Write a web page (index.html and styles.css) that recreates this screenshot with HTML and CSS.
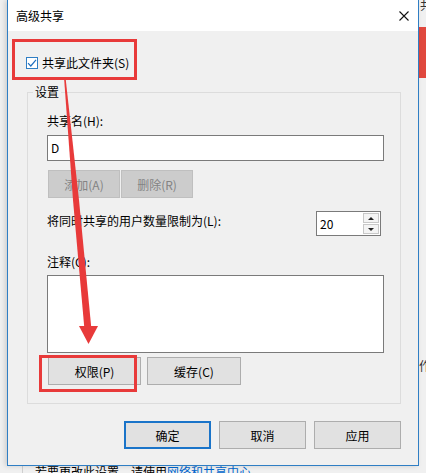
FILE: index.html
```html
<!DOCTYPE html>
<html lang="zh-CN">
<head>
    <meta charset="UTF-8">
    <meta name="viewport" content="width=device-width, initial-scale=1.0">
    <title>高级共享</title>
    <link rel="stylesheet" href="styles.css">
</head>
<body>
    <div class="desktop">
        <!-- Janela de trás (propriedades) -->
        <div class="back-window">
            <span class="back-glyph">共</span>
            <span class="back-glyph low">作</span>
            <div class="back-line"></div>
            <p class="back-note">若要更改此设置，请使用<span class="back-link">网络和共享中心</span>。</p>
        </div>
        <div class="back-banner"></div>

        <!-- Diálogo -->
        <div class="dialog">
            <div class="titlebar">
                <span class="title">高级共享</span>
                <svg class="close" width="10" height="10" viewBox="0 0 10 10">
                    <path d="M0.5 0.5 L9.5 9.5 M9.5 0.5 L0.5 9.5" stroke="#111" stroke-width="1.1" fill="none"/>
                </svg>
            </div>

            <div class="dialog-body">
                <div class="check-row">
                    <span class="checkbox">
                        <svg width="10" height="10" viewBox="0 0 10 10">
                            <path d="M1 5.2 L3.8 8 L9 1.8" stroke="#1f6fbf" stroke-width="1.2" fill="none"/>
                        </svg>
                    </span>
                    <span>共享此文件夹(S)</span>
                </div>

                <fieldset class="group">
                    <legend>设置</legend>
                    <div class="group-body">
                        <div class="field-label">共享名(H):</div>
                        <div class="textbox">D</div>

                        <div class="btn-row small">
                            <button class="btn" disabled>添加(A)</button>
                            <button class="btn" disabled>删除(R)</button>
                        </div>

                        <div class="limit-row">
                            <span class="limit-label">将同时共享的用户数量限制为(L):</span>
                            <div class="spin">
                                <span class="spin-value">20</span>
                                <div class="spin-btns">
                                    <span class="spin-btn up"></span>
                                    <span class="spin-btn down"></span>
                                </div>
                            </div>
                        </div>

                        <div class="field-label comment">注释(C):</div>
                        <div class="memo"></div>

                        <div class="btn-row wide">
                            <button class="btn perm">权限(P)</button>
                            <button class="btn cache">缓存(C)</button>
                        </div>
                    </div>
                </fieldset>

                <div class="dialog-actions">
                    <button class="btn action default">确定</button>
                    <button class="btn action">取消</button>
                    <button class="btn action">应用</button>
                </div>
            </div>
        </div>

        <!-- Marcações vermelhas -->
        <div class="mark mark-share"></div>
        <div class="mark mark-perm"></div>
        <svg class="arrow" width="426" height="473" viewBox="0 0 426 473">
            <polygon points="64.2,80 73,200 84.5,330 91.5,330 79,200 65.8,80" fill="#e83a3a"/>
            <polygon points="79,326 98,326 88.5,344" fill="#e83a3a"/>
        </svg>
    </div>
</body>
</html>
```

FILE: styles.css
```css
/* Base */
* {
    box-sizing: border-box;
}

body {
    margin: 0;
    font-family: "Noto Sans CJK SC", "Noto Sans", sans-serif;
    font-size: 12px;
    line-height: 16px;
    color: #000;
    background: #f0f0f0;
    overflow: hidden;
}

.desktop {
    position: relative;
    width: 426px;
    height: 473px;
    overflow: hidden;
}

/* Janela de trás */
.back-window {
    position: absolute;
    left: 0;
    top: 0;
    width: 426px;
    height: 473px;
    background: #f0f0f0;
}

.back-glyph {
    position: absolute;
    left: 420px;
    top: -3px;
    font-size: 12px;
    color: #333;
}

.back-glyph.low {
    top: 358px;
    left: 419px;
}

.back-banner {
    position: absolute;
    left: 418px;
    top: 27px;
    width: 8px;
    height: 51px;
    background-color: #e0483e;
}

.back-line {
    position: absolute;
    left: 22px;
    top: 466px;
    width: 1px;
    height: 10px;
    background: #cfcfcf;
}

.back-note {
    position: absolute;
    left: 35px;
    top: 464px;
    margin: 0;
    font-size: 12px;
    white-space: nowrap;
}

.back-link {
    color: #0066cc;
}

/* Diálogo */
.dialog {
    position: absolute;
    left: 7px;
    top: 0;
    width: 412px;
    background: #f0f0f0;
    border: 1px solid #2f7ec4;
    border-top: none;
    box-shadow: -2px 0 5px rgba(0, 0, 0, 0.15);
}

.titlebar {
    display: flex;
    align-items: center;
    justify-content: space-between;
    height: 31px;
    padding: 0 9px 0 8px;
    background: #fff;
}

.close {
    display: block;
}

.dialog-body {
    padding: 24px 0 16px;
}

.check-row {
    display: flex;
    align-items: center;
    gap: 4px;
    height: 16px;
    padding-left: 18px;
}

.checkbox {
    display: flex;
    align-items: center;
    justify-content: center;
    width: 12px;
    height: 12px;
    border: 1px solid #2f7ec4;
    background: #fff;
}

/* Grupo "设置" */
.group {
    margin: 13px 17px 0 19px;
    padding: 0;
    border: 1px solid #dcdcdc;
    min-width: 0;
}

.group legend {
    margin-left: 5px;
    padding: 0 2px;
    line-height: 16px;
}

.group-body {
    padding: 13px 16px 18px 19px;
}

.textbox {
    height: 26px;
    margin-top: 6px;
    padding: 4px 3px;
    border: 1px solid #7a7a7a;
    background: #fff;
}

.btn {
    height: 28px;
    padding: 0;
    font-family: inherit;
    font-size: 12px;
    color: #000;
    background: #e1e1e1;
    border: 1px solid #adadad;
}

.btn:disabled {
    background: #cccccc;
    border-color: #bfbfbf;
    color: #838383;
}

.btn-row {
    display: flex;
}

.btn-row.small {
    gap: 1px;
    margin: 9px 0 0 1px;
}

.btn-row.small .btn {
    width: 72px;
}

.limit-row {
    display: flex;
    justify-content: space-between;
    margin-top: 13px;
    padding-right: 3px;
}

.limit-label {
    margin-top: 2px;
}

.spin {
    display: flex;
    justify-content: space-between;
    width: 65px;
    height: 25px;
    padding: 1px 1px 1px 3px;
    border: 1px solid #7a7a7a;
    background: #fff;
}

.spin-value {
    line-height: 21px;
}

.spin-btns {
    display: flex;
    flex-direction: column;
    gap: 1px;
    width: 16px;
}

.spin-btn {
    position: relative;
    flex: 1;
    background: #f4f4f4;
    border: 1px solid #c8c8c8;
}

.spin-btn::after {
    content: '';
    position: absolute;
    left: 4px;
    top: 3px;
    border-left: 3px solid transparent;
    border-right: 3px solid transparent;
}

.spin-btn.up::after {
    border-bottom: 3px solid #222;
}

.spin-btn.down::after {
    border-top: 3px solid #222;
}

.field-label.comment {
    margin-top: 18px;
}

.memo {
    height: 78px;
    margin-top: 5px;
    border: 1px solid #7a7a7a;
    background: #fff;
}

.btn-row.wide {
    gap: 6px;
    margin: 4px 0 0 1px;
}

.btn.perm {
    width: 93px;
}

.btn.cache {
    width: 94px;
}

/* Botões do rodapé */
.dialog-actions {
    display: flex;
    justify-content: flex-end;
    gap: 8px;
    margin-top: 17px;
    padding-right: 17px;
}

.btn.action {
    width: 87px;
}

.btn.default {
    border: 2px solid #1a74c9;
}

/* Marcações */
.mark {
    position: absolute;
    border: 3px solid #e83a3a;
}

.mark-share {
    left: 12px;
    top: 39px;
    width: 125px;
    height: 41px;
}

.mark-perm {
    left: 39px;
    top: 355px;
    width: 98px;
    height: 37px;
}

.arrow {
    position: absolute;
    left: 0;
    top: 0;
    pointer-events: none;
}
```
